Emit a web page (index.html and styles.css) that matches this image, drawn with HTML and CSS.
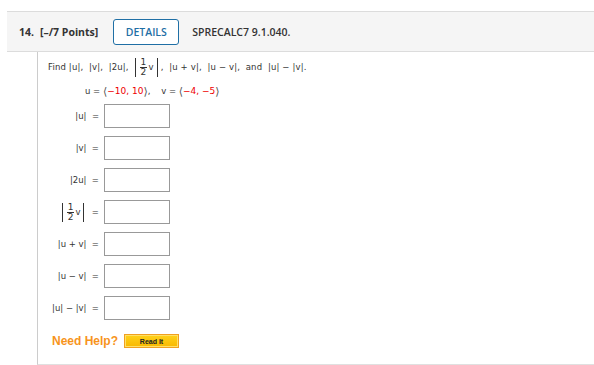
FILE: index.html
```html
<!DOCTYPE html>
<html>
<head>
<meta charset="utf-8">
<link rel="stylesheet" href="styles.css">
</head>
<body>
<div class="question">
  <div class="q-header">
    <span class="q-num">14.</span>
    <span class="q-points">[–/7 Points]</span>
    <span class="details">DETAILS</span>
    <span class="q-code">SPRECALC7 9.1.040.</span>
  </div>
  <div class="q-body">
    <p class="prompt">Find |u|, &nbsp;|v|, &nbsp;|2u|, <span class="abs"><span class="frac"><span>1</span><span class="den">2</span></span>v</span>, &nbsp;|u + v|, &nbsp;|u − v|, &nbsp;and &nbsp;|u| − |v|.</p>
    <p class="given">u = <span class="ang">⟨</span><span class="red">−10, 10</span><span class="ang">⟩</span>, &nbsp;&nbsp;&nbsp;v = <span class="ang">⟨</span><span class="red">−4, −5</span><span class="ang">⟩</span></p>
    <div class="answers">
      <div class="row"><span class="lbl">|u| &nbsp;=</span><span class="box"></span></div>
      <div class="row"><span class="lbl">|v| &nbsp;=</span><span class="box"></span></div>
      <div class="row"><span class="lbl">|2u| &nbsp;=</span><span class="box"></span></div>
      <div class="row"><span class="lbl"><span class="abs"><span class="frac"><span>1</span><span class="den">2</span></span>v</span> &nbsp;=</span><span class="box"></span></div>
      <div class="row"><span class="lbl">|u + v| &nbsp;=</span><span class="box"></span></div>
      <div class="row"><span class="lbl">|u − v| &nbsp;=</span><span class="box"></span></div>
      <div class="row"><span class="lbl">|u| − |v| &nbsp;=</span><span class="box"></span></div>
    </div>
    <div class="help">
      <span class="need">Need Help?</span>
      <span class="readit">Read It</span>
    </div>
  </div>
</div>
</body>
</html>
```
FILE: styles.css
```css
html, body { margin: 0; padding: 0; background: #fff; }
body { width: 594px; height: 365px; overflow: hidden; }

.question { margin: 11px 0 0 7px; }

.q-header {
  display: flex;
  align-items: center;
  height: 39px;
  background: #f5f5f5;
  border-top: 1px solid #dcdcdc;
  border-bottom: 1px solid #dcdcdc;
  padding-left: 12px;
  font-family: "Open Sans", sans-serif;
  font-weight: 700;
  font-size: 10.5px;
  color: #333;
}
.q-num { margin-right: 6px; }
.q-points { margin-right: 15px; }
.details {
  box-sizing: border-box;
  width: 66px;
  height: 26px;
  border: 1px solid #1f6fa5;
  border-radius: 3px;
  color: #1f6fa5;
  display: flex;
  align-items: center;
  justify-content: center;
  font-weight: 600;
  background: #fff;
  margin-right: 13px;
  margin-top: 1px;
}
.q-code { font-weight: 600; }

.q-body {
  margin-left: 30px;
  border-left: 1px solid #ccc;
  border-bottom: 1px solid #e0e0e0;
  padding: 4px 0 16px 10px;
  font-family: "DejaVu Sans", Verdana, sans-serif;
  font-size: 8.5px;
  color: #333;
}

.prompt { margin: 0; height: 22px; display: flex; align-items: center; white-space: pre; letter-spacing: 0.15px; }
.abs {
  display: inline-flex;
  align-items: center;
  border-left: 1px solid #333;
  border-right: 1px solid #333;
  padding: 0 3px 0 4px;
  height: 19px;
  margin: 0 3px 0 3px;
}
.frac {
  display: inline-flex;
  flex-direction: column;
  align-items: center;
  font-size: 9px;
  line-height: 9px;
  margin-right: 1px;
}
.frac .den { border-top: 1px solid #333; padding: 0 1px; }

.given { margin: 4px 0 0 37px; height: 18px; display: flex; align-items: center; white-space: pre; }
.given .red { color: #e00; font-size: 9px; }
.ang { font-size: 11px; color: #555; }

.answers {
  display: flex;
  flex-direction: column;
  gap: 8px;
  margin-top: 4px;
}
.row { display: flex; align-items: center; height: 24px; }
.lbl {
  width: 51px;
  text-align: right;
  white-space: pre;
  display: flex;
  justify-content: flex-end;
  align-items: center;
  margin-right: 5px;
}
.row .abs { margin: 0 2px 0 0; }
.box {
  box-sizing: border-box;
  width: 66px;
  height: 24px;
  border: 1px solid #999;
  background: #fff;
}

.help {
  display: flex;
  align-items: center;
  margin: 14px 0 0 4px;
  gap: 6px;
}
.need {
  font-family: "Liberation Sans", Arial, sans-serif;
  font-weight: 700;
  font-size: 12px;
  color: #f7941d;
}
.readit {
  box-sizing: border-box;
  width: 55px;
  height: 14px;
  border: 1px solid #f0a020;
  background: linear-gradient(#ffd21a, #f8b800);
  box-shadow: inset 0 0 0 1px #ffe066;
  font-family: "Liberation Sans", Arial, sans-serif;
  font-weight: 700;
  font-size: 7px;
  color: #222;
  display: flex;
  align-items: center;
  justify-content: center;
}
```
